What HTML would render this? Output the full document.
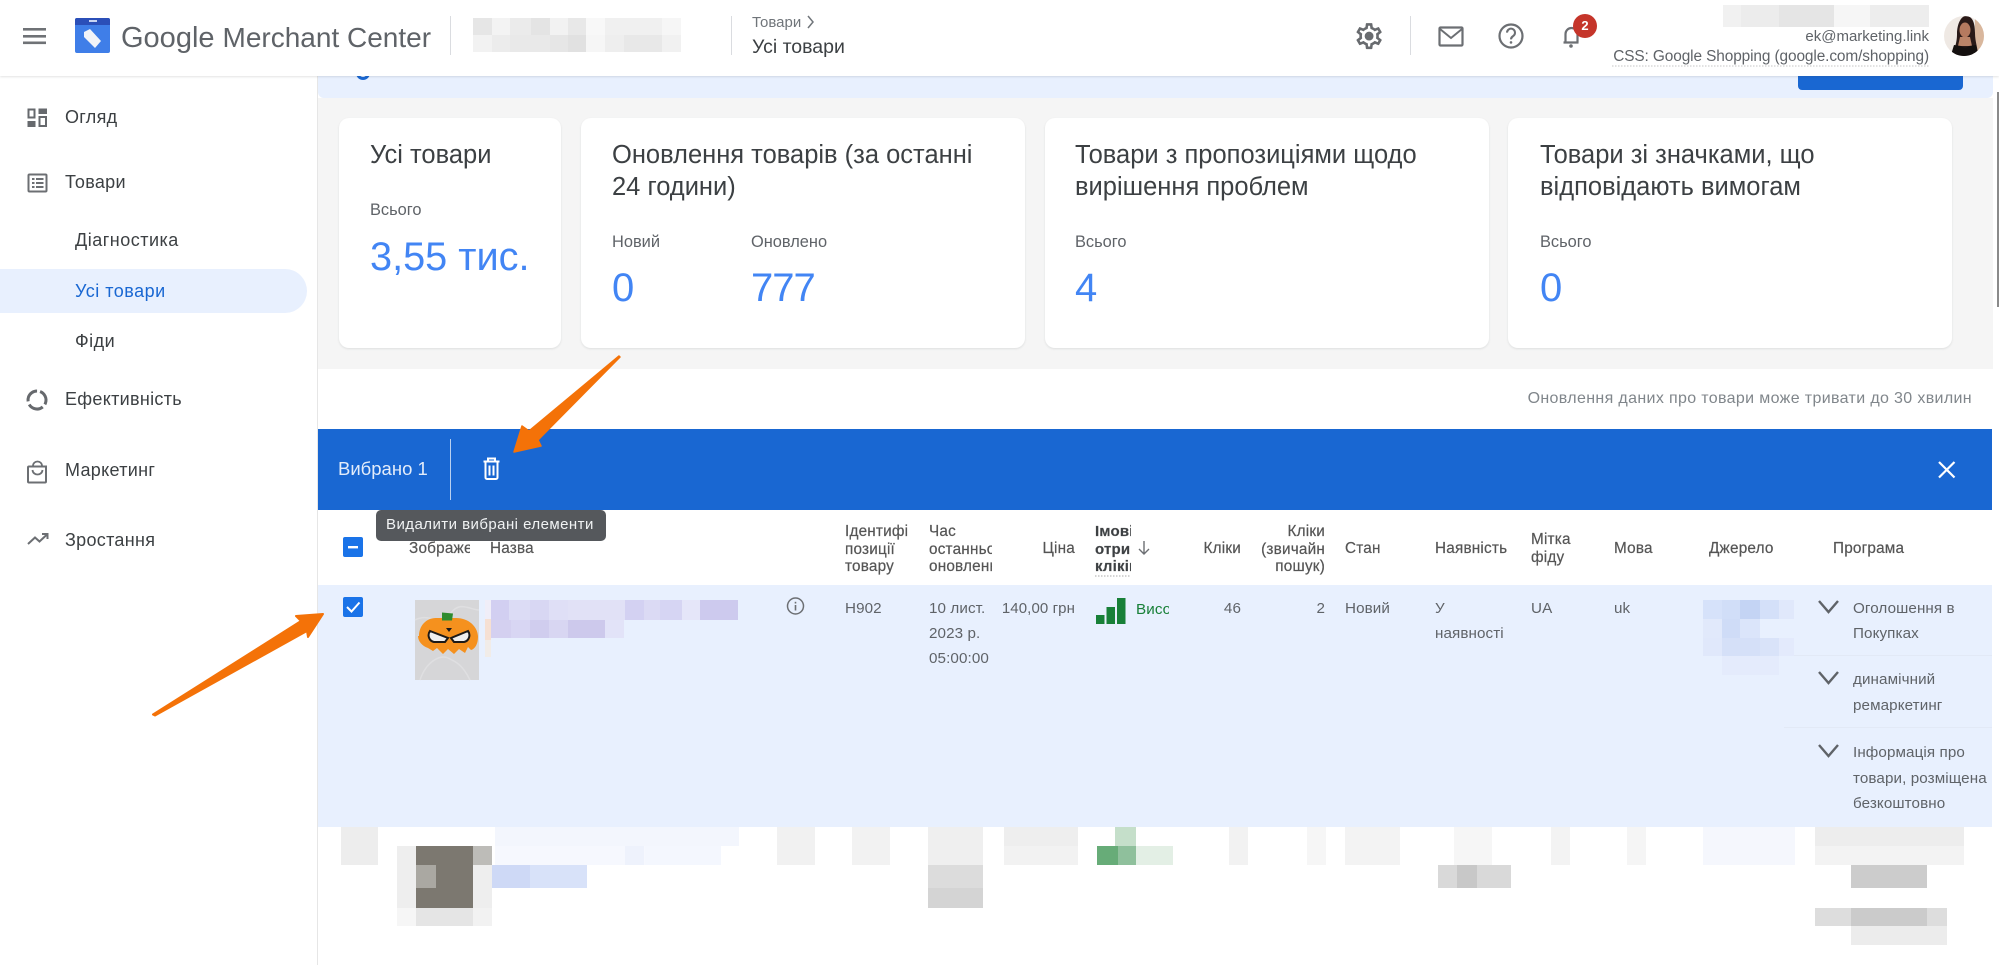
<!DOCTYPE html>
<html lang="uk"><head><meta charset="utf-8"><title>Google Merchant Center</title>
<style>
html,body{margin:0;padding:0;background:#fff}
#p{position:relative;width:1999px;height:965px;overflow:hidden;background:#fff;font-family:"Liberation Sans",sans-serif;color:#3c4043}
.t{position:absolute;white-space:nowrap;line-height:20px;font-size:14px}
.r{transform:translateX(-100%)}
.b{position:absolute}
.card{position:absolute;top:118px;height:230px;background:#fff;border-radius:10px;box-shadow:0 1px 2px rgba(60,64,67,.12)}
.ti{font-size:25.5px;color:#3c4043;line-height:32px}
.s{font-size:16.4px;color:#5f6368}
.v{font-size:40px;color:#4285f4;line-height:44px}
.n{font-size:18px;color:#3c4043;letter-spacing:.3px}
.m{font-size:18px;color:#3c4043;letter-spacing:.5px}
.h{font-size:15.3px;color:#555;letter-spacing:.2px;-webkit-text-stroke:.2px #555}
.c{font-size:15.2px;color:#5f6368;letter-spacing:.1px}
svg{position:absolute;left:0;top:0;overflow:visible}
</style></head><body><div id="p">

<!-- main background -->
<div class="b" style="left:318px;top:76px;width:1675px;height:22px;background:#e8f0fe;border-radius:0 0 6px 6px"></div>
<div class="b" style="left:318px;top:98px;width:1675px;height:271px;background:#f5f5f5"></div>
<div class="b" style="left:317px;top:76px;width:1px;height:889px;background:#e6e6e6"></div>
<div class="b" style="left:1798px;top:76px;width:165px;height:14px;background:#1967d2;border-radius:0 0 4px 4px"></div>
<div class="b" style="left:355px;top:76px;width:16px;height:5px;overflow:hidden"><div style="width:8px;height:8px;border:3px solid #1967d2;border-radius:50%;margin:-10px 0 0 1px"></div></div>
<div class="b" style="left:1997px;top:92px;width:2px;height:215px;background:#8a8a8a"></div>

<!-- header -->
<div class="b" style="left:0;top:0;width:1999px;height:76px;background:#fff;box-shadow:0 1px 2px rgba(60,64,67,.14)"></div>

<!-- shapes -->
<svg width="1999" height="965" viewBox="0 0 1999 965">
 <!-- hamburger -->
 <g fill="#6f7276"><rect x="23" y="28" width="23" height="2.6"/><rect x="23" y="35" width="23" height="2.6"/><rect x="23" y="41.5" width="23" height="2.6"/></g>
 <!-- logo -->
 <rect x="75" y="18" width="35" height="35" rx="2" fill="#3f7ee8"/>
 <path d="M75 20a2 2 0 0 1 2-2h31a2 2 0 0 1 2 2v5H75z" fill="#2b4fb8"/>
 <rect x="89" y="20" width="8" height="2" fill="#c8d4f2"/>
 <path d="M84 32l6-3 11 12-6 7-11-11z" fill="#f1f3f8"/>
 <!-- dividers -->
 <g fill="#dadce0"><rect x="450" y="16" width="1" height="39"/><rect x="731" y="16" width="1" height="39"/><rect x="1410" y="16" width="1" height="39"/></g>
 <!-- header mosaic -->
 <g>
  <rect x="473" y="18" width="208" height="34" fill="#f4f4f4"/>
  <rect x="473" y="18" width="19" height="17" fill="#e6e6e6"/><rect x="492" y="18" width="18" height="17" fill="#f3f3f3"/><rect x="510" y="18" width="21" height="17" fill="#ebebeb"/><rect x="531" y="18" width="19" height="17" fill="#e4e4e4"/><rect x="550" y="18" width="18" height="17" fill="#f2f2f2"/><rect x="568" y="18" width="18" height="17" fill="#e8e8e8"/><rect x="586" y="18" width="19" height="17" fill="#f8f8f8"/><rect x="605" y="18" width="57" height="17" fill="#f0f0f0"/><rect x="662" y="18" width="19" height="17" fill="#f6f6f6"/>
  <rect x="473" y="35" width="19" height="17" fill="#f2f2f2"/><rect x="492" y="35" width="18" height="17" fill="#ececec"/><rect x="510" y="35" width="40" height="17" fill="#e9e9e9"/><rect x="550" y="35" width="18" height="17" fill="#e6e6e6"/><rect x="568" y="35" width="18" height="17" fill="#e1e1e1"/><rect x="586" y="35" width="19" height="17" fill="#f6f6f6"/><rect x="605" y="35" width="19" height="17" fill="#eeeeee"/><rect x="624" y="35" width="38" height="17" fill="#e8e8e8"/><rect x="662" y="35" width="19" height="17" fill="#f1f1f1"/>
 </g>
 <!-- name mosaic -->
 <rect x="1723" y="5" width="206" height="22" fill="#f1f1f1"/>
 <rect x="1741" y="5" width="38" height="22" fill="#ececec"/><rect x="1779" y="5" width="55" height="22" fill="#e5e5e5"/><rect x="1834" y="5" width="36" height="22" fill="#f6f6f6"/><rect x="1870" y="5" width="59" height="22" fill="#ededed"/>
 <!-- gear -->
 <g transform="translate(1353.5 20.5) scale(1.3)"><path fill="#686b6f" d="M19.43 12.98c.04-.32.07-.64.07-.98 0-.34-.03-.66-.07-.98l2.11-1.65c.19-.15.24-.42.12-.64l-2-3.46c-.09-.16-.26-.25-.44-.25-.06 0-.12.01-.17.03l-2.49 1c-.52-.4-1.08-.73-1.69-.98l-.38-2.65C14.46 2.18 14.25 2 14 2h-4c-.25 0-.46.18-.49.42l-.38 2.65c-.61.25-1.17.59-1.69.98l-2.49-1c-.06-.02-.12-.03-.18-.03-.17 0-.34.09-.43.25l-2 3.46c-.13.22-.07.49.12.64l2.11 1.65c-.04.32-.07.65-.07.98 0 .33.03.66.07.98l-2.11 1.65c-.19.15-.24.42-.12.64l2 3.46c.09.16.26.25.44.25.06 0 .12-.01.17-.03l2.49-1c.52.4 1.08.73 1.69.98l.38 2.65c.03.24.24.42.49.42h4c.25 0 .46-.18.49-.42l.38-2.65c.61-.25 1.17-.59 1.69-.98l2.49 1c.06.02.12.03.18.03.17 0 .34-.09.43-.25l2-3.46c.12-.22.07-.49-.12-.64l-2.11-1.65zm-1.98-1.71c.04.31.05.52.05.73 0 .21-.02.43-.05.73l-.14 1.13.89.7 1.08.84-.7 1.21-1.27-.51-1.04-.42-.9.68c-.43.32-.84.56-1.25.73l-1.06.43-.16 1.13-.2 1.35h-1.4l-.19-1.35-.16-1.13-1.06-.43c-.43-.18-.83-.41-1.23-.71l-.91-.7-1.06.43-1.27.51-.7-1.21 1.08-.84.89-.7-.14-1.13c-.03-.31-.05-.54-.05-.74s.02-.43.05-.73l.14-1.13-.89-.7-1.08-.84.7-1.21 1.27.51 1.04.42.9-.68c.43-.32.84-.56 1.25-.73l1.06-.43.16-1.13.2-1.35h1.39l.19 1.35.16 1.13 1.06.43c.43.18.83.41 1.23.71l.91.7 1.06-.43 1.27-.51.7 1.21-1.07.85-.89.7.14 1.13z"/><circle cx="12" cy="12" r="3.4" fill="#686b6f"/></g>
 <!-- mail -->
 <rect x="1439.5" y="27.5" width="23" height="18" rx="1" fill="none" stroke="#6c6f73" stroke-width="2.2"/>
 <path d="M1440 29l11 9 11-9" fill="none" stroke="#6c6f73" stroke-width="2"/>
 <!-- help -->
 <circle cx="1511" cy="36" r="11.5" fill="none" stroke="#6c6f73" stroke-width="2.2"/>
 <path d="M1507 32.6a4 4 0 1 1 6.2 3.4c-1.4 1-2.2 1.6-2.2 3.4" fill="none" stroke="#6c6f73" stroke-width="2"/><circle cx="1511" cy="42.4" r="1.3" fill="#6c6f73"/>
 <!-- bell -->
 <path d="M1563.5 42.5h15M1565.5 42.5V34a6 6 0 0 1 12 0v8.5" fill="none" stroke="#6c6f73" stroke-width="2.2"/><circle cx="1571" cy="46" r="1.8" fill="#6c6f73"/>
 <circle cx="1585" cy="26" r="12" fill="#c5352a"/>
 <!-- avatar -->
 <circle cx="1964" cy="36" r="20" fill="#efe9e4"/>
 <clipPath id="av"><circle cx="1964" cy="36" r="20"/></clipPath>
 <g clip-path="url(#av)">
  <rect x="1975" y="16" width="10" height="40" fill="#d9b79d"/>
  <path d="M1953 56c1-8 4-12 4-22 0-10 4-18 9-18 7 0 9 8 9 17 0 9 3 15 3 23z" fill="#2a1a18"/>
  <ellipse cx="1965" cy="30" rx="5.5" ry="7.5" fill="#b57a5f"/>
  <path d="M1960 37h10l2 9h-14z" fill="#bb8468"/>
  <path d="M1950 58l4-13 7 1c2 2 6 2 8 0l7-1 3 13z" fill="#14100f"/>
 </g>

 <!-- sidebar pill -->
 <path d="M0 269h285a22 22 0 0 1 0 44H0z" fill="#e8f0fe"/>
 <!-- sidebar icons -->
 <g fill="#66696d">
  <path d="M27.5 108.500h8v10h-8zM29.500 110.500v6h4v-6z" fill-rule="evenodd"/><rect x="38.500" y="108.500" width="8.500" height="5.500"/>
  <rect x="27.500" y="121" width="8" height="6"/><path d="M38.500 116h8.500v11h-8.500zM40.500 118v7h4.500v-7z" fill-rule="evenodd"/>
 </g>
 <rect x="28.500" y="174.500" width="18" height="17" rx="1" fill="none" stroke="#6c6f73" stroke-width="2"/>
 <g fill="#6c6f73"><rect x="32" y="178" width="2.500" height="2"/><rect x="32" y="182" width="2.500" height="2"/><rect x="32" y="186" width="2.500" height="2"/><rect x="36" y="178" width="7.500" height="2"/><rect x="36" y="182" width="7.500" height="2"/><rect x="36" y="186" width="7.500" height="2"/></g>
 <circle cx="37" cy="400" r="9" fill="none" stroke="#66696d" stroke-width="3" stroke-dasharray="15.500 3.300" transform="rotate(-70 37 400)"/>
 <path d="M29 466.500h17v15a1 1 0 0 1-1 1H29a1 1 0 0 1-1-1v-14a1 1 0 0 1 1-1z" fill="none" stroke="#6c6f73" stroke-width="2"/>
 <path d="M33 466c0-6 9-6 9 0M32.500 470c.5 6 9.500 6 10 0" fill="none" stroke="#6c6f73" stroke-width="1.800"/>
 <path d="M28 544l7-6.500 4.500 4L47 534.500M42 534h5.500v5" fill="none" stroke="#6c6f73" stroke-width="2"/>

 <!-- blue bar -->
 <rect x="318" y="429" width="1674" height="81" fill="#1967d2"/>
 <rect x="450" y="439" width="1" height="61" fill="#b9d0f0"/>
 <!-- trash -->
 <path d="M483.500 461.500h16M488 461v-2.500h7v2.500M485.500 462v15.500a1.500 1.500 0 0 0 1.500 1.500h9a1.500 1.500 0 0 0 1.500-1.500V462M489.500 465.500v10M493.500 465.500v10" fill="none" stroke="#fff" stroke-width="2"/>
 <!-- close -->
 <path d="M1939 462l15.500 15.500M1954.500 462L1939 477.500" stroke="#fff" stroke-width="2.200"/>

 <!-- row -->
 <rect x="318" y="585" width="1674" height="242" fill="#e8f0fe"/>
 <rect x="1794" y="655" width="198" height="1" fill="#e2e9f6"/>
 <rect x="1784" y="727" width="208" height="1" fill="#e2e9f6"/>
 <!-- checkboxes -->
 <rect x="343" y="537" width="20" height="20" rx="2" fill="#1a73e8"/><rect x="348" y="546" width="10" height="2.400" fill="#fff"/>
 <rect x="343" y="597" width="20" height="20" rx="2" fill="#1a73e8"/><path d="M347 607l4.500 4.500 8-9" fill="none" stroke="#fff" stroke-width="2"/>
 <!-- product image -->
 <rect x="415" y="600" width="64" height="80" fill="#d6d6d8"/>
 <path d="M415 620c15-8 25 8 35-6s20-4 29-4M420 680c6-18 20-26 28-22s14 6 22 22" fill="none" stroke="#dfdfe1" stroke-width="1.500"/>
 <path d="M419 636c0-10 7-18 17-18h20c13 0 22 9 22 19 0 7-3 12-7 13l-3-3-3 6-6-4-5 5-6-5-5 5-6-6-4 3-5-3c-6-2-10-7-10-12z" fill="#f5911e"/>
 <path d="M442 612.500l11 1-1 7-10 0z" fill="#2e8b2e"/>
 <path d="M430 631l18 7-3 4h-11c-5-1-7-7-4-11zM468 631l-17 7 3 4h10c5-1 7-7 4-11z" fill="#efefef" stroke="#1d1a18" stroke-width="2"/>
 <path d="M446 628h6l-3 4z" fill="#1d1a18"/>
 <!-- title mosaic -->
 <rect x="485" y="600" width="6" height="19" fill="#f0eef8"/><rect x="485" y="619" width="6" height="21" fill="#f6e0d3"/><rect x="485" y="640" width="6" height="17" fill="#f1ece8"/>
 <g>
  <rect x="491" y="600" width="18" height="20" fill="#d2cff1"/><rect x="509" y="600" width="21" height="20" fill="#dcdcf5"/><rect x="530" y="600" width="19" height="20" fill="#d8d7f3"/><rect x="549" y="600" width="19" height="20" fill="#dfdff6"/><rect x="568" y="600" width="57" height="20" fill="#e1e1f6"/><rect x="625" y="600" width="19" height="20" fill="#d3d1f2"/><rect x="644" y="600" width="16" height="20" fill="#dbdaf4"/><rect x="660" y="600" width="22" height="20" fill="#d6d5f3"/><rect x="682" y="600" width="18" height="20" fill="#e5e6f9"/><rect x="700" y="600" width="38" height="20" fill="#cdcaee"/>
  <rect x="491" y="620" width="20" height="18" fill="#d4d0f0"/><rect x="511" y="620" width="19" height="18" fill="#d8d6f3"/><rect x="530" y="620" width="19" height="18" fill="#d0cdee"/><rect x="549" y="620" width="19" height="18" fill="#d8d6f2"/><rect x="568" y="620" width="37" height="18" fill="#cdc9ec"/><rect x="605" y="620" width="19" height="18" fill="#e2e3f8"/>
 </g>
 <!-- info -->
 <circle cx="795.500" cy="606" r="8" fill="none" stroke="#6c6f73" stroke-width="1.500"/><rect x="794.700" y="605" width="1.600" height="5.500" fill="#6c6f73"/><rect x="794.700" y="601.800" width="1.600" height="1.700" fill="#6c6f73"/>
 <!-- signal bars -->
 <g fill="#188038"><rect x="1096" y="615" width="8.500" height="9"/><rect x="1106.500" y="607" width="8.500" height="17"/><rect x="1117" y="598" width="8.500" height="26"/></g>
 <!-- sort arrow -->
 <path d="M1144 541v13M1139 549l5 5 5-5" fill="none" stroke="#6c6f73" stroke-width="1.400"/>
 <!-- dotted header underline -->
 <path d="M1095 576h35" stroke="#aaa" stroke-width="1" stroke-dasharray="1.500 1.500"/>
 <path d="M1612 66h317" stroke="#c5c5c5" stroke-width="1" stroke-dasharray="1.500 1.500"/>
 <!-- source mosaic -->
 <g>
  <rect x="1703" y="600" width="19" height="19" fill="#d6e2fa"/><rect x="1722" y="600" width="18" height="19" fill="#d1def8"/><rect x="1740" y="600" width="20" height="19" fill="#c4d4f4"/><rect x="1760" y="600" width="19" height="19" fill="#d4e0f9"/><rect x="1779" y="600" width="15" height="19" fill="#e0e8fb"/>
  <rect x="1703" y="619" width="19" height="19" fill="#e1e9fb"/><rect x="1722" y="619" width="18" height="19" fill="#cfdcf7"/><rect x="1740" y="619" width="20" height="19" fill="#dbe5fa"/>
  <rect x="1703" y="638" width="19" height="18" fill="#e0e8fb"/><rect x="1722" y="638" width="38" height="18" fill="#d5e0f8"/><rect x="1760" y="638" width="19" height="18" fill="#d9e3f9"/><rect x="1779" y="638" width="15" height="18" fill="#e3eafc"/>
  <rect x="1722" y="656" width="57" height="19" fill="#e4ebfc"/>
 </g>
 <!-- chevrons -->
 <g fill="none" stroke="#5f6368" stroke-width="2.400"><path d="M1819 601l9.500 11 9.500-11"/><path d="M1819 672l9.500 11 9.500-11"/><path d="M1819 745l9.500 11 9.500-11"/></g>

 <!-- bottom mosaic -->
 <g>
  <rect x="341" y="827" width="37" height="38" fill="#ededed"/>
  <rect x="495" y="827" width="244" height="19" fill="#f3f6fd"/><rect x="495" y="846" width="150" height="19" fill="#f6f8fe"/><rect x="625" y="846" width="19" height="19" fill="#eef2fc"/><rect x="645" y="846" width="76" height="19" fill="#f4f7fe"/>
  <rect x="777" y="827" width="38" height="38" fill="#f1f1f1"/><rect x="852" y="827" width="38" height="38" fill="#f2f2f2"/><rect x="928" y="827" width="55" height="38" fill="#efefef"/><rect x="1004" y="827" width="74" height="19" fill="#eeeeee"/><rect x="1004" y="846" width="74" height="19" fill="#f2f2f2"/>
  <rect x="1115" y="827" width="21" height="19" fill="#c5dfca"/><rect x="1097" y="846" width="21" height="19" fill="#67ac78"/><rect x="1118" y="846" width="18" height="19" fill="#8fc09c"/><rect x="1136" y="846" width="37" height="19" fill="#e3efe5"/>
  <rect x="1229" y="827" width="19" height="38" fill="#f2f2f2"/><rect x="1307" y="827" width="19" height="38" fill="#f6f6f6"/><rect x="1345" y="827" width="55" height="38" fill="#f3f3f3"/><rect x="1454" y="827" width="38" height="38" fill="#f6f6f6"/><rect x="1551" y="827" width="19" height="38" fill="#f3f3f3"/><rect x="1627" y="827" width="19" height="38" fill="#f5f5f5"/>
  <rect x="1703" y="827" width="92" height="38" fill="#f5f7fd"/>
  <rect x="1815" y="827" width="149" height="19" fill="#ededed"/><rect x="1815" y="846" width="149" height="19" fill="#f3f3f3"/>
  <rect x="397" y="846" width="95" height="62" fill="#eeeeee"/>
  <rect x="416" y="846" width="57" height="62" fill="#7c7870"/><rect x="416" y="865" width="20" height="23" fill="#aaa8a2"/><rect x="473" y="846" width="19" height="19" fill="#bdbcb8"/>
  <rect x="416" y="908" width="57" height="18" fill="#e5e5e5"/><rect x="397" y="908" width="19" height="18" fill="#f6f6f6"/><rect x="473" y="908" width="19" height="18" fill="#f2f2f2"/>
  <rect x="492" y="865" width="95" height="23" fill="#d8e2f9"/><rect x="492" y="865" width="38" height="23" fill="#ced9f6"/>
  <rect x="928" y="865" width="55" height="23" fill="#dcdcdc"/><rect x="928" y="888" width="55" height="20" fill="#d4d4d4"/>
  <rect x="1438" y="865" width="73" height="23" fill="#d9d9d9"/><rect x="1457" y="865" width="20" height="23" fill="#c8c8c8"/>
  <rect x="1851" y="865" width="76" height="23" fill="#cccccc"/>
  <rect x="1815" y="908" width="132" height="18" fill="#dddddd"/><rect x="1851" y="908" width="76" height="18" fill="#cbcbcb"/><rect x="1851" y="926" width="96" height="19" fill="#ececec"/>
 </g>
</svg>

<!-- header text -->
<div class="t" style="left:121px;top:26px;font-size:29px;line-height:24px;color:#5f6368">Google<span style="font-size:28px;margin-left:8px">Merchant Center</span></div>
<div class="t" style="left:752px;top:13px;font-size:15px;color:#70757a">Товари</div>
<svg width="1999" height="965" style="pointer-events:none"><path d="M808 16l5 6-5 6" fill="none" stroke="#70757a" stroke-width="1.500"/></svg>
<div class="t" style="left:752px;top:37px;font-size:19.500px;color:#3c4043">Усі товари</div>
<div class="t" style="left:1585px;top:16px;width:0;text-align:center;font-size:13px;font-weight:bold;color:#fff"><span style="display:inline-block;transform:translateX(-50%)">2</span></div>
<div class="t r" style="left:1929px;top:27px;font-size:15px;color:#5f6368">ek@marketing.link</div>
<div class="t r" style="left:1929px;top:47px;font-size:15.400px;letter-spacing:-.1px;color:#5f6368">CSS: Google Shopping (google.com/shopping)</div>

<!-- sidebar text -->
<div class="t n" style="left:65px;top:107px">Огляд</div>
<div class="t n" style="left:65px;top:172px">Товари</div>
<div class="t m" style="left:75px;top:230px">Діагностика</div>
<div class="t m" style="left:75px;top:281px;color:#1967d2">Усі товари</div>
<div class="t m" style="left:75px;top:331px">Фіди</div>
<div class="t n" style="left:65px;top:389px">Ефективність</div>
<div class="t n" style="left:65px;top:460px">Маркетинг</div>
<div class="t n" style="left:65px;top:530px">Зростання</div>

<!-- cards -->
<div class="card" style="left:339px;width:222px"></div>
<div class="card" style="left:581px;width:444px"></div>
<div class="card" style="left:1045px;width:444px"></div>
<div class="card" style="left:1508px;width:444px"></div>
<div class="t ti" style="left:370px;top:139px">Усі товари</div>
<div class="t s" style="left:370px;top:200px">Всього</div>
<div class="t v" style="left:370px;top:235px;font-size:39.700px">3,55 тис.</div>
<div class="t ti" style="left:612px;top:139px">Оновлення товарів (за останні<br>24 години)</div>
<div class="t s" style="left:612px;top:232px">Новий</div>
<div class="t s" style="left:751px;top:232px">Оновлено</div>
<div class="t v" style="left:612px;top:266px">0</div>
<div class="t v" style="left:751px;top:266px;letter-spacing:-1px">777</div>
<div class="t ti" style="left:1075px;top:139px">Товари з пропозиціями щодо<br>вирішення проблем</div>
<div class="t s" style="left:1075px;top:232px">Всього</div>
<div class="t v" style="left:1075px;top:266px">4</div>
<div class="t ti" style="left:1540px;top:139px">Товари зі значками, що<br>відповідають вимогам</div>
<div class="t s" style="left:1540px;top:232px">Всього</div>
<div class="t v" style="left:1540px;top:266px">0</div>

<div class="t r" style="left:1972px;top:389px;font-size:16px;letter-spacing:.35px;color:#80868b">Оновлення даних про товари може тривати до 30 хвилин</div>
<div class="t" style="left:338px;top:459px;font-size:18.500px;color:#e3ecfa">Вибрано 1</div>

<!-- table header -->
<div class="t h" style="left:409px;top:539px;width:61px;overflow:hidden">Зображення</div>
<div class="t h" style="left:490px;top:539px">Назва</div>
<div class="t h" style="left:845px;top:523px;line-height:17.500px;width:63px;overflow:hidden">Ідентифікатор<br>позиції<br>товару</div>
<div class="t h" style="left:929px;top:523px;line-height:17.500px;width:63px;overflow:hidden">Час<br>останнього<br>оновлення</div>
<div class="t h r" style="left:1075px;top:539px">Ціна</div>
<div class="t h" style="left:1095px;top:523px;line-height:17.500px;width:36px;overflow:hidden;font-size:15px;font-weight:bold;color:#3c4043">Імовірність<br>отримання<br>кліків</div>
<div class="t h r" style="left:1241px;top:539px">Кліки</div>
<div class="t h" style="left:1255px;top:523px;line-height:17.500px;width:70px;overflow:hidden;text-align:right">Кліки<br><span style="float:right;white-space:nowrap">(звичайн</span><br>пошук)</div>
<div class="t h" style="left:1345px;top:539px">Стан</div>
<div class="t h" style="left:1435px;top:539px">Наявність</div>
<div class="t h" style="left:1531px;top:531px;line-height:18px">Мітка<br>фіду</div>
<div class="t h" style="left:1614px;top:539px">Мова</div>
<div class="t h" style="left:1709px;top:539px;width:64px;overflow:hidden">Джерело</div>
<div class="t h" style="left:1833px;top:539px">Програма</div>

<!-- row text -->
<div class="t c" style="left:845px;top:599px">H902</div>
<div class="t c" style="left:929px;top:598px;line-height:25px;margin-top:-2px">10 лист.<br>2023 р.<br>05:00:00</div>
<div class="t c r" style="left:1075px;top:599px;font-size:15px">140,00 грн</div>
<div class="t c" style="left:1136px;top:600px;width:33px;overflow:hidden;color:#188038">Висока</div>
<div class="t c r" style="left:1241px;top:599px">46</div>
<div class="t c r" style="left:1325px;top:599px">2</div>
<div class="t c" style="left:1345px;top:599px">Новий</div>
<div class="t c" style="left:1435px;top:596px;line-height:25px">У<br>наявності</div>
<div class="t c" style="left:1531px;top:599px">UA</div>
<div class="t c" style="left:1614px;top:599px">uk</div>
<div class="t c" style="left:1853px;top:596px;line-height:25px">Оголошення в<br>Покупках</div>
<div class="t c" style="left:1853px;top:667px;line-height:25.500px">динамічний<br>ремаркетинг</div>
<div class="t c" style="left:1853px;top:740px;line-height:25.500px">Інформація про<br>товари, розміщена<br>безкоштовно</div>

<!-- tooltip -->
<div class="b" style="left:376px;top:510px;width:230px;height:31px;background:#55585c;border-radius:5px"></div>
<div class="t" style="left:386px;top:515px;font-size:15px;letter-spacing:.45px;color:#f1f3f4">Видалити вибрані елементи</div>

<!-- arrows -->
<svg width="1999" height="965">
 <path d="M153 714.500L301 621 296 616 323 614 308 637 307 631 155 715.500z" fill="#f47208" stroke="#f47208" stroke-width="2" stroke-linejoin="round"/>
 <path d="M620 357L538 440 541 446 514 452 522 426 529 431 619 356z" fill="#f47208" stroke="#f47208" stroke-width="1.500" stroke-linejoin="round"/>
</svg>
</div></body></html>
